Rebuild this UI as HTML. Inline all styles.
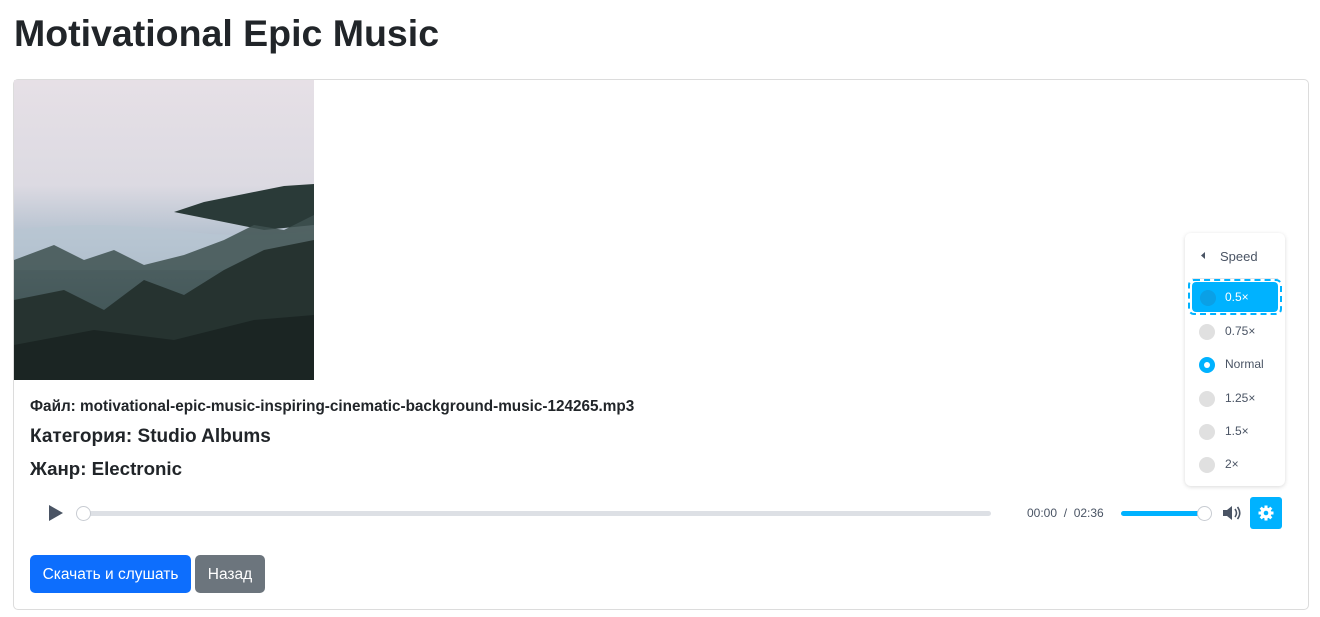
<!DOCTYPE html>
<html><head><meta charset="utf-8"><style>
*{box-sizing:border-box}
body{margin:0;background:#fff;font-family:"Liberation Sans","DejaVu Sans",sans-serif;color:#212529;width:1320px;height:617px;overflow:hidden;position:relative}
h1{position:absolute;left:14px;top:11px;margin:0;font-size:37.5px;font-weight:600;line-height:44px}
.card{position:absolute;left:13px;top:79px;width:1296px;height:531px;border:1px solid #dcdcdc;border-radius:5px}
.t{position:absolute;left:30px;white-space:nowrap}
.btn{position:absolute;top:555px;height:38px;border-radius:5px;color:#fff;font-size:15.5px;line-height:40px;text-align:center}
.menu{position:absolute;left:1185px;top:233px;width:100px;height:253px;background:#fff;border-radius:6px;box-shadow:0 1px 4px rgba(0,0,0,.15)}
.it{position:absolute;left:0;width:100px;height:30px;font-size:12px;color:#4a5464}
.rd{position:absolute;left:14px;top:8px;width:16px;height:16px;border-radius:50%;background:#e0e0e0}
.it span{position:absolute;left:40px;top:8px}
</style></head><body>
<h1>Motivational Epic Music</h1>
<div class="card"></div>
<svg style="position:absolute;left:14px;top:80px" width="300" height="300" viewBox="0 0 300 300">
<defs><linearGradient id="s" x1="0" y1="0" x2="0" y2="1"><stop offset="0" stop-color="#e6e0e6"/><stop offset=".35" stop-color="#dcdae2"/><stop offset=".55" stop-color="#aebdcc"/><stop offset=".75" stop-color="#6d8596"/><stop offset="1" stop-color="#33413f"/></linearGradient></defs>
<rect width="300" height="300" fill="url(#s)"/>
<path d="M160 132 L190 122 L230 114 L270 106 L300 104 L300 145 L250 150 L200 140 Z" fill="#2a3a38"/>
<path d="M0 150 Q80 140 160 150 Q230 160 300 150 L300 190 L0 190 Z" fill="#b8c6d2" opacity=".8"/>
<path d="M0 180 L40 165 L70 180 L100 170 L130 185 L170 175 L210 160 L240 145 L270 150 L300 135 L300 300 L0 300 Z" fill="#3e5150" opacity=".85"/>
<path d="M0 220 L50 210 L90 230 L130 200 L170 215 L210 190 L250 170 L300 160 L300 300 L0 300 Z" fill="#263330"/>
<path d="M0 265 L80 250 L160 260 L240 240 L300 235 L300 300 L0 300 Z" fill="#1b2523"/>
</svg>
<div class="t" style="top:398px;font-size:15.3px;font-weight:600">Файл: motivational-epic-music-inspiring-cinematic-background-music-124265.mp3</div>
<div class="t" style="top:426px;font-size:19px;font-weight:600">Категория: Studio Albums</div>
<div class="t" style="top:458px;font-size:18.7px;font-weight:600">Жанр: Electronic</div>
<svg style="position:absolute;left:48px;top:504px" width="16" height="18"><path d="M1 1 L15 9 L1 17 Z" fill="#4a5464"/></svg>
<div style="position:absolute;left:80px;top:511px;width:911px;height:5px;background:#dde0e5;border-radius:3px"></div>
<div style="position:absolute;left:76px;top:506px;width:15px;height:15px;border-radius:50%;background:#fff;border:1px solid #c8ccd2"></div>
<div style="position:absolute;left:1027px;top:506px;font-size:12px;color:#4a5464">00:00 &nbsp;/ &nbsp;02:36</div>
<div style="position:absolute;left:1121px;top:511px;width:84px;height:5px;background:#00b2ff;border-radius:3px"></div>
<div style="position:absolute;left:1197px;top:506px;width:15px;height:15px;border-radius:50%;background:#fff;border:1px solid #c8ccd2"></div>
<svg style="position:absolute;left:1222px;top:505px" width="20" height="16"><path d="M1 5 H5 L10 1 V15 L5 11 H1 Z" fill="#4a5464"/><path d="M13 4 Q16 8 13 12 M15.5 2 Q20 8 15.5 14" stroke="#4a5464" stroke-width="1.6" fill="none"/></svg>
<div style="position:absolute;left:1250px;top:497px;width:32px;height:32px;background:#00b2ff;border-radius:3px"></div>
<svg style="position:absolute;left:1258px;top:505px" width="16" height="16" viewBox="0 0 16 16"><g fill="#fff"><circle cx="8" cy="8" r="5.5"/><rect x="6.5" y="0.5" width="3" height="15"/><rect x="0.5" y="6.5" width="15" height="3"/><rect x="6.5" y="0.5" width="3" height="15" transform="rotate(45 8 8)"/><rect x="6.5" y="0.5" width="3" height="15" transform="rotate(-45 8 8)"/></g><circle cx="8" cy="8" r="2.3" fill="#00b2ff"/></svg>
<div style="position:absolute;left:1261px;top:481px;width:10px;height:10px;background:#fff;transform:rotate(45deg)"></div>
<div class="menu">
 <div class="it" style="top:8px"><svg style="position:absolute;left:16px;top:11px" width="4" height="7"><path d="M4 0 L0 3.5 L4 7Z" fill="#4a5464"/></svg><span style="left:35px;font-size:13px">Speed</span></div>
 <div style="position:absolute;left:7px;top:45px;width:86px;height:1px;background:#e4e6ea"></div>
 <div style="position:absolute;left:3px;top:46px;width:94px;height:36px;border:2px dashed #00b2ff;border-radius:6px"></div>
 <div class="it" style="top:49px;left:7px;width:86px;background:#00b2ff;border-radius:4px;color:#fff"><div class="rd" style="left:8px;background:#0aa0e6"></div><span style="left:33px">0.5×</span></div>
 <div class="it" style="top:83px"><div class="rd"></div><span>0.75×</span></div>
 <div class="it" style="top:116px"><div class="rd" style="background:#00b2ff"><div style="position:absolute;left:5px;top:5px;width:6px;height:6px;border-radius:50%;background:#fff"></div></div><span>Normal</span></div>
 <div class="it" style="top:150px"><div class="rd"></div><span>1.25×</span></div>
 <div class="it" style="top:183px"><div class="rd"></div><span>1.5×</span></div>
 <div class="it" style="top:216px"><div class="rd"></div><span>2×</span></div>
</div>
<div class="btn" style="left:30px;width:161px;background:#0d6efd">Скачать и слушать</div>
<div class="btn" style="left:195px;width:70px;background:#6c757d">Назад</div>
</body></html>
